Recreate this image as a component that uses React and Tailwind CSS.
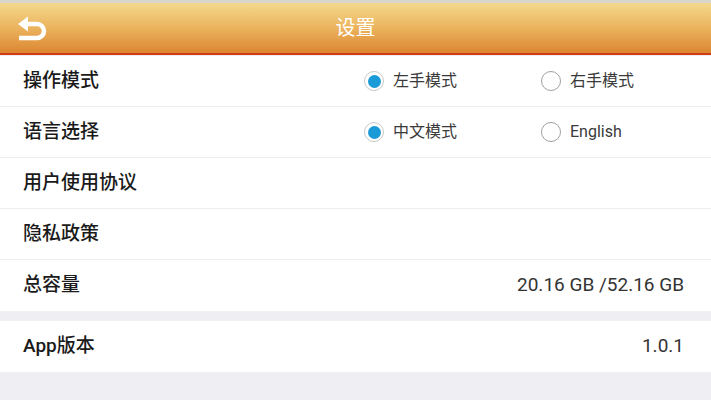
const FONT = { fontFamily: 'Roboto, "Noto Sans CJK SC", sans-serif' };

function Radio({ checked, label }) {
  return (
    <div className="flex items-center gap-[9px] w-[177px]">
      {checked ? (
        <span className="w-[20px] h-[20px] rounded-full border border-[#c9c9c9] flex items-center justify-center bg-white">
          <span className="w-[13px] h-[13px] rounded-full bg-[#1a9ad6]" />
        </span>
      ) : (
        <span className="w-[20px] h-[20px] rounded-full border-[1.5px] border-[#a0a0a0] bg-white" />
      )}
      <span className="text-[16px] text-[#3a3a3a]">{label}</span>
    </div>
  );
}

function Row({ label, children, last }) {
  return (
    <div
      className={`h-[51px] flex items-center pl-[23px] pr-[27px] bg-white ${
        last ? '' : 'border-b border-[#eeeeee]'
      }`}
    >
      <span className="w-[341px] shrink-0 text-[19px] font-medium text-[#1a1a1a]">{label}</span>
      <div className="flex-1 flex justify-end">{children}</div>
    </div>
  );
}

function Value({ children }) {
  return <span className="text-[19px] text-[#333333]">{children}</span>;
}

export default function App() {
  return (
    <div className="w-[711px] h-[400px] bg-[#efeef3] overflow-hidden" style={FONT}>
      <div className="h-[3px] bg-[#d9d5cd]" />
      <div className="relative h-[52px] flex items-center justify-center bg-gradient-to-b from-[#f3d98c] via-[#ebb35d] to-[#dc8630] border-b-[2px] border-[#cf3a17]">
        <svg className="absolute left-[16px] top-[13px]" width="32" height="26" viewBox="0 0 32 26">
          <path d="M2 8 L12 0.5 L12 15.5 Z" fill="white" />
          <path
            d="M10 8 H21 a7 7 0 0 1 0 14 H3"
            fill="none"
            stroke="white"
            strokeWidth="4.5"
          />
        </svg>
        <span className="text-[20px] text-white">设置</span>
      </div>

      <div className="mt-[1px]">
        <Row label="操作模式">
          <div className="flex w-full">
            <Radio checked label="左手模式" />
            <Radio label="右手模式" />
          </div>
        </Row>
        <Row label="语言选择">
          <div className="flex w-full">
            <Radio checked label="中文模式" />
            <Radio label="English" />
          </div>
        </Row>
        <Row label="用户使用协议" />
        <Row label="隐私政策" />
        <Row label="总容量" last>
          <Value>20.16 GB /52.16 GB</Value>
        </Row>
      </div>

      <div className="mt-[10px]">
        <Row label="App版本" last>
          <Value>1.0.1</Value>
        </Row>
      </div>
    </div>
  );
}
